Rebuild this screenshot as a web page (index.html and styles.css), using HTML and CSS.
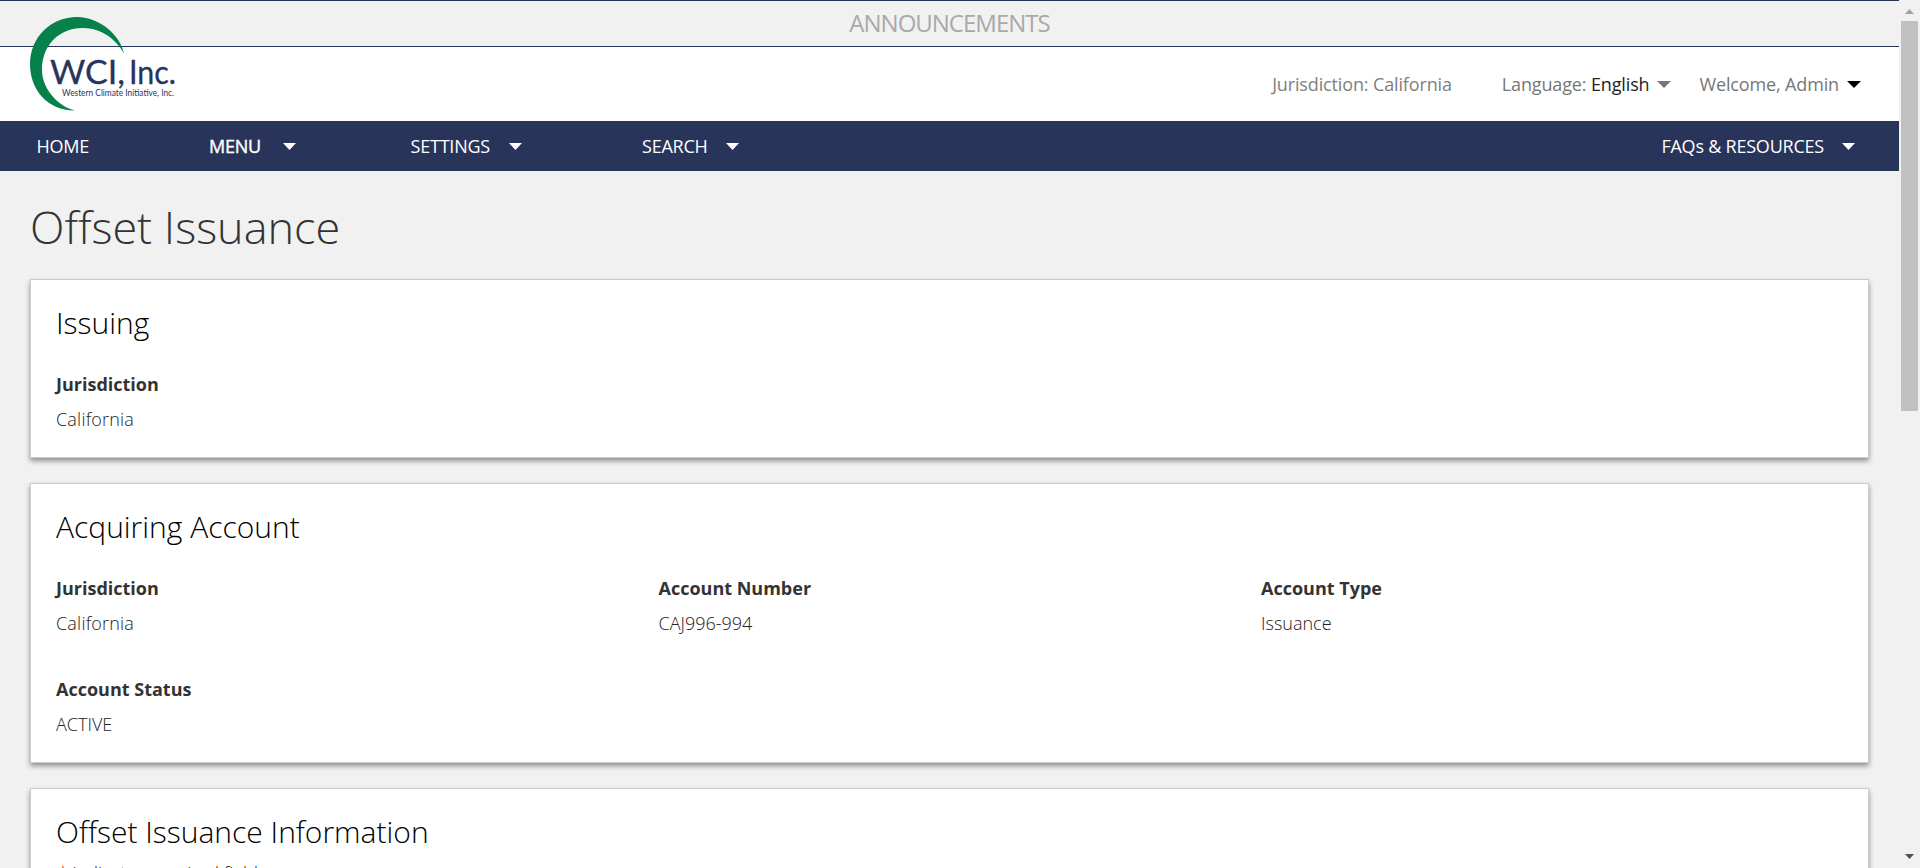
FILE: index.html
```html
<!DOCTYPE html>
<html lang="en">
<head>
<meta charset="utf-8">
<title>Offset Issuance</title>
<link rel="stylesheet" href="styles.css">
</head>
<body>
<div class="window">
  <div class="page">
    <div class="announcements">ANNOUNCEMENTS</div>
    <header class="header">
      <svg class="logo" width="160" height="100" viewBox="0 0 160 100" role="img" aria-label="WCI, Inc.">
        <path fill="#058149" d="M95 43.500C92 27 72 7 48 7C22 7 1 27 1 54C1 81 20 101 46 100.500C28 96 13 78 13 60C13 36 29 18 54 18C72 18 87 29 95 43.500Z"/>
        <text class="logo-name" x="21" y="73.500" textLength="75" lengthAdjust="spacingAndGlyphs">WCI,</text>
        <text class="logo-name" x="100" y="73.500" textLength="47" lengthAdjust="spacingAndGlyphs">Inc.</text>
        <text class="logo-sub" x="33" y="86" textLength="112" lengthAdjust="spacingAndGlyphs">Western Climate Initiative, Inc.</text>
      </svg>
      <div class="header-item jurisdiction">Jurisdiction: California</div>
      <div class="header-item language">Language: <span class="dark">English</span><svg class="caret grey" width="14" height="7" viewBox="0 0 14 7"><path d="M0 0H14L7 7Z"/></svg></div>
      <div class="header-item user">Welcome, Admin<svg class="caret black" width="14" height="7" viewBox="0 0 14 7"><path d="M0 0H14L7 7Z"/></svg></div>
    </header>
    <nav class="nav">
      <a class="nav-home">HOME</a>
      <a class="nav-menu">MENU<svg class="caret" width="13" height="7" viewBox="0 0 13 7"><path d="M0 0H13L6.500 7Z"/></svg></a>
      <a class="nav-settings">SETTINGS<svg class="caret" width="13" height="7" viewBox="0 0 13 7"><path d="M0 0H13L6.500 7Z"/></svg></a>
      <a class="nav-search">SEARCH<svg class="caret" width="13" height="7" viewBox="0 0 13 7"><path d="M0 0H13L6.500 7Z"/></svg></a>
      <a class="nav-faq">FAQs &amp; RESOURCES<svg class="caret" width="13" height="7" viewBox="0 0 13 7"><path d="M0 0H13L6.500 7Z"/></svg></a>
    </nav>
    <main class="content">
      <h1 class="title">Offset Issuance</h1>
      <section class="card issuing">
        <h2>Issuing</h2>
        <dl class="fields">
          <div><dt>Jurisdiction</dt><dd>California</dd></div>
        </dl>
      </section>
      <section class="card acquiring">
        <h2>Acquiring Account</h2>
        <dl class="fields">
          <div><dt>Jurisdiction</dt><dd>California</dd></div>
          <div><dt>Account Number</dt><dd>CAJ996-994</dd></div>
          <div><dt>Account Type</dt><dd>Issuance</dd></div>
          <div><dt>Account Status</dt><dd>ACTIVE</dd></div>
        </dl>
      </section>
      <section class="card information">
        <h2>Offset Issuance Information</h2>
        <p class="note"><span class="star">*</span> indicates required fields</p>
      </section>
    </main>
  </div>
  <div class="scrollbar">
    <svg width="10" height="6" viewBox="0 0 10 6"><path fill="#a3a3a3" d="M0 5H9L4.500 0Z"/></svg>
    <div class="thumb"></div>
    <svg class="down" width="10" height="6" viewBox="0 0 10 6"><path fill="#505050" d="M0 0H9L4.500 5Z"/></svg>
  </div>
</div>
</body>
</html>
```
FILE: styles.css
```css
* { box-sizing: border-box; }
body {
  margin: 0;
  background: #f1f1f1;
  color: #333;
  font-family: "Open Sans", sans-serif;
  font-size: 18px;
}
.window { display: flex; height: 868px; overflow: hidden; }
.page { width: 1899px; overflow: hidden; }
.announcements {
  height: 47px;
  border-top: 1px solid #29345b;
  border-bottom: 1px solid #29345b;
  text-align: center;
  color: #a9a9a9;
  font-size: 24px;
  line-height: 43px;
  letter-spacing: -1px;
}
.header {
  display: flex;
  align-items: center;
  height: 74px;
  padding: 0 38px 0 29px;
  background: #fff;
  color: #777;
  white-space: nowrap;
  letter-spacing: -.14px;
}
.logo { margin: -48px auto 0 0; position: relative; overflow: visible; letter-spacing: 0; }
.logo-name { font: 33px Lato, sans-serif; fill: #29345b; stroke: #29345b; stroke-width: .3px; }
.logo-sub { font: 8.500px Lato, sans-serif; fill: #29345b; }
.header-item { display: flex; align-items: center; white-space: pre; }
.jurisdiction { margin-right: 50px; color: #808080; }
.language { margin-right: 28px; }
.dark { color: #222; }
.caret { margin-left: 8px; fill: #fff; }
.caret.grey { fill: #777; }
.caret.black { fill: #000; }
.nav {
  display: flex;
  align-items: center;
  height: 50px;
  padding: 0 44px 0 36.500px;
  background: #29345b;
  color: #fff;
  letter-spacing: -.22px;
}
.nav a { display: flex; align-items: center; }
.nav-home { width: 172.500px; }
.nav-menu { width: 201.500px; }
.nav-settings { width: 231.500px; }
.nav-menu .caret { margin-left: 22px; }
.nav-settings .caret { margin-left: 19px; }
.nav-search .caret, .nav-faq .caret { margin-left: 18px; }
.nav-menu { -webkit-text-stroke: .4px #fff; }
.nav-faq { margin-left: auto; }
.content { padding: 0 30px; }
.title {
  height: 108px;
  margin: 0;
  padding-top: 24px;
  font-size: 45px;
  font-weight: 300;
  line-height: 64px;
}
.card {
  margin-bottom: 25px;
  padding: 22px 25px 0;
  border: 1px solid #ccc;
  background: #fff;
  box-shadow: 0 3px 5px rgba(0, 0, 0, .4);
}
.issuing { height: 179px; }
.acquiring { height: 280px; }
.information { height: 400px; }
.card h2 {
  margin: 0;
  color: #000;
  font-size: 30px;
  font-weight: 300;
  line-height: 42px;
}
.fields { display: grid; grid-template-columns: repeat(3, 602.500px); row-gap: 31px; margin: 22px 0 0; }
.fields dt { font-weight: 700; line-height: 36px; }
.fields dd { margin: 0; color: #222; font-weight: 300; line-height: 34px; }
.fields > div:first-child dd { letter-spacing: .2px; }
.note { margin: 8px 0 0; color: #222; font-weight: 300; line-height: 24px; }
.star { padding-left: 2px; color: #c8102e; }
.scrollbar {
  display: flex;
  flex-direction: column;
  align-items: center;
  width: 21px;
  padding-top: 9px;
  background: #f1f1f1;
}
.thumb { width: 17px; height: 390px; margin-top: 6px; background: #c1c1c1; }
.down { margin-top: 443px; }
```
